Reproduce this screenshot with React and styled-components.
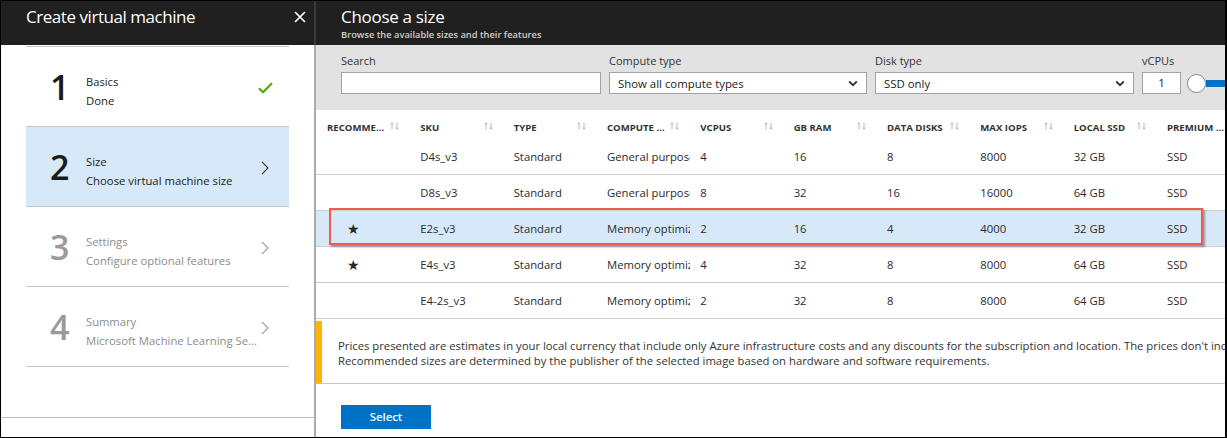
import React from "react";
import styled, { createGlobalStyle } from "styled-components";

const FONT = `"Segoe UI", "Open Sans", "Noto Sans", sans-serif`;

const GlobalStyle = createGlobalStyle`
  html, body { margin: 0; padding: 0; background: #fff; }
  body { font-family: ${FONT}; color: #333; }
  * { box-sizing: border-box; }
`;

const steps = [
  { num: 1, title: "Basics", sub: "Done", state: "done" },
  { num: 2, title: "Size", sub: "Choose virtual machine size", state: "active" },
  { num: 3, title: "Settings", sub: "Configure optional features", state: "todo" },
  { num: 4, title: "Summary", sub: "Microsoft Machine Learning Se...", state: "todo" },
];

const columns = ["RECOMME...", "SKU", "TYPE", "COMPUTE ...", "VCPUS", "GB RAM", "DATA DISKS", "MAX IOPS", "LOCAL SSD", "PREMIUM ..."];

const sizes = [
  { rec: false, sku: "D4s_v3", type: "Standard", compute: "General purpose", vcpu: 4, ram: 16, disks: 8, iops: 8000, ssd: "32 GB", premium: "SSD" },
  { rec: false, sku: "D8s_v3", type: "Standard", compute: "General purpose", vcpu: 8, ram: 32, disks: 16, iops: 16000, ssd: "64 GB", premium: "SSD" },
  { rec: true, sku: "E2s_v3", type: "Standard", compute: "Memory optimized", vcpu: 2, ram: 16, disks: 4, iops: 4000, ssd: "32 GB", premium: "SSD", selected: true },
  { rec: true, sku: "E4s_v3", type: "Standard", compute: "Memory optimized", vcpu: 4, ram: 32, disks: 8, iops: 8000, ssd: "64 GB", premium: "SSD" },
  { rec: false, sku: "E4-2s_v3", type: "Standard", compute: "Memory optimized", vcpu: 2, ram: 32, disks: 8, iops: 8000, ssd: "64 GB", premium: "SSD" },
];

function CloseIcon() {
  return (
    <svg width="12" height="12" viewBox="0 0 12 12" stroke="#fff" strokeWidth="1.7" fill="none">
      <path d="M1 1L11 11M11 1L1 11" />
    </svg>
  );
}

function CheckIcon() {
  return (
    <svg width="15" height="12" viewBox="0 0 15 12" stroke="#5aa700" strokeWidth="2.2" fill="none">
      <path d="M1 6.2L5 10.2L14 1.2" />
    </svg>
  );
}

function ChevronRight({ color }) {
  return (
    <svg width="8" height="14" viewBox="0 0 8 14" stroke={color} strokeWidth="1.1" fill="none">
      <path d="M1 0.8L7 7L1 13.2" />
    </svg>
  );
}

function ChevronDown() {
  return (
    <svg width="10" height="7" viewBox="0 0 10 7" stroke="#333" strokeWidth="1.8" fill="none">
      <path d="M1.2 1.5L5 5.2L8.8 1.5" />
    </svg>
  );
}

function SortIcon() {
  return (
    <svg width="9" height="8" viewBox="0 0 9 8" stroke="#b3b3b3" strokeWidth="0.9" fill="none">
      <path d="M2 7.5V0.8M0.4 2.4L2 0.8L3.6 2.4" />
      <path d="M7 0.5V7.2M5.4 5.6L7 7.2L8.6 5.6" />
    </svg>
  );
}

export default function App() {
  return (
    <>
      <GlobalStyle />
      <Frame>
        <Wizard>
          <WizardHeader>
            <WizardTitle>Create virtual machine</WizardTitle>
            <CloseButton><CloseIcon /></CloseButton>
          </WizardHeader>
          <Steps>
            {steps.map((s) => (
              <Step key={s.num} $state={s.state}>
                <StepNum $state={s.state}>{s.num}</StepNum>
                <StepText $state={s.state}>
                  <StepTitle>{s.title}</StepTitle>
                  <StepSub>{s.sub}</StepSub>
                </StepText>
                <StepIcon>
                  {s.state === "done" ? (
                    <CheckIcon />
                  ) : (
                    <ChevronRight color={s.state === "active" ? "#333" : "#9a9a9a"} />
                  )}
                </StepIcon>
              </Step>
            ))}
          </Steps>
          <WizardFooter />
        </Wizard>

        <Divider />

        <Blade>
          <BladeHeader>
            <BladeTitle>Choose a size</BladeTitle>
            <BladeSubtitle>Browse the available sizes and their features</BladeSubtitle>
          </BladeHeader>

          <Filters>
            <Field $w={260}>
              <FieldLabel>Search</FieldLabel>
              <TextBox />
            </Field>
            <Field $w={258}>
              <FieldLabel>Compute type</FieldLabel>
              <SelectBox>
                <span>Show all compute types</span>
                <ChevronDown />
              </SelectBox>
            </Field>
            <Field $w={259}>
              <FieldLabel>Disk type</FieldLabel>
              <SelectBox>
                <span>SSD only</span>
                <ChevronDown />
              </SelectBox>
            </Field>
            <Field $w={100}>
              <FieldLabel>vCPUs</FieldLabel>
              <SliderRow>
                <NumberBox>1</NumberBox>
                <Thumb />
                <Track />
              </SliderRow>
            </Field>
          </Filters>

          <Table>
            <HeadRow>
              {columns.map((c) => (
                <HeadCell key={c}>
                  <span>{c}</span>
                  <SortIcon />
                </HeadCell>
              ))}
            </HeadRow>
            <Body>
              {sizes.map((r) => (
                <Row key={r.sku} $selected={r.selected}>
                  <Cell $star>{r.rec ? "★" : ""}</Cell>
                  <Cell>{r.sku}</Cell>
                  <Cell>{r.type}</Cell>
                  <Cell>{r.compute}</Cell>
                  <Cell>{r.vcpu}</Cell>
                  <Cell>{r.ram}</Cell>
                  <Cell>{r.disks}</Cell>
                  <Cell>{r.iops}</Cell>
                  <Cell>{r.ssd}</Cell>
                  <Cell>{r.premium}</Cell>
                </Row>
              ))}
              <Callout />
            </Body>
          </Table>

          <Notice>
            <NoticeLine>
              Prices presented are estimates in your local currency that include only Azure infrastructure costs and any discounts for the subscription and location. The prices don't include any applicable software costs.
            </NoticeLine>
            <NoticeLine>
              Recommended sizes are determined by the publisher of the selected image based on hardware and software requirements.
            </NoticeLine>
          </Notice>

          <BladeFooter>
            <PrimaryButton>Select</PrimaryButton>
          </BladeFooter>
        </Blade>
      </Frame>
    </>
  );
}

const Frame = styled.div`
  width: 1227px;
  height: 438px;
  display: flex;
  border: 1px solid #000;
  border-right-width: 2px;
  background: #fff;
  overflow: hidden;
`;

/* wizard (left blade) */
const Wizard = styled.div`
  width: 313px;
  flex: none;
  display: flex;
  flex-direction: column;
`;

const WizardHeader = styled.div`
  height: 44px;
  background: #202020;
  display: flex;
  align-items: flex-start;
  justify-content: space-between;
  padding: 3px 8px 0 25px;
`;

const WizardTitle = styled.div`
  color: #fff;
  font-size: 17px;
  letter-spacing: -0.45px;
  line-height: 26px;
  font-weight: 400;
`;

const CloseButton = styled.div`
  margin-top: 7px;
  width: 12px;
  height: 12px;
  display: flex;
`;

const Steps = styled.div`
  margin: 1px 25px 0;
`;

const Step = styled.div`
  height: 80px;
  display: flex;
  align-items: flex-start;
  padding: 0 16px 0 24px;
  border-top: 1px solid #c6c6c6;
  background: ${(p) => (p.$state === "active" ? "#d7e8f8" : "transparent")};
  &:last-child {
    height: 81px;
    border-bottom: 1px solid #c6c6c6;
  }
`;

const StepNum = styled.div`
  width: 36px;
  margin-top: 23px;
  font-size: 34px;
  line-height: 34px;
  font-weight: 600;
  color: ${(p) => (p.$state === "todo" ? "#9a9a9a" : "#1b1b1b")};
`;

const StepText = styled.div`
  flex: 1;
  min-width: 0;
  margin-top: 26px;
  color: ${(p) => (p.$state === "todo" ? "#8c8c8c" : "#222")};
`;

const StepTitle = styled.div`
  font-size: 11.2px;
  line-height: 18px;
`;

const StepSub = styled.div`
  font-size: 11.3px;
  line-height: 19px;
  white-space: nowrap;
`;

const StepIcon = styled.div`
  width: 16px;
  height: 79px;
  display: flex;
  align-items: center;
  justify-content: center;
  padding-top: 2px;
`;

const WizardFooter = styled.div`
  margin-top: auto;
  height: 20px;
  border-top: 1px solid #bbb;
`;

const Divider = styled.div`
  width: 2px;
  flex: none;
  background: linear-gradient(#3a3a3a 44px, #ababab 44px);
`;

/* size blade */
const Blade = styled.div`
  flex: 1;
  min-width: 0;
  display: flex;
  flex-direction: column;
  overflow: hidden;
`;

const BladeHeader = styled.div`
  height: 44px;
  background: #202020;
  padding: 4px 25px 0;
`;

const BladeTitle = styled.div`
  color: #fff;
  font-size: 17px;
  letter-spacing: -0.3px;
  line-height: 23px;
`;

const BladeSubtitle = styled.div`
  color: #cfcfcf;
  font-size: 9.3px;
  line-height: 13px;
  font-weight: 600;
`;

const Filters = styled.div`
  height: 65px;
  background: #e2e2e2;
  display: flex;
  gap: 8px;
  padding: 8px 25px 0;
`;

const Field = styled.div`
  width: ${(p) => p.$w}px;
  flex: none;
  display: flex;
  flex-direction: column;
`;

const FieldLabel = styled.div`
  font-size: 11px;
  line-height: 16px;
  color: #333;
  margin-bottom: 3px;
`;

const TextBox = styled.div`
  height: 22px;
  background: #fff;
  border: 1px solid #a3a3a3;
`;

const SelectBox = styled.div`
  height: 22px;
  background: #fff;
  border: 1px solid #a3a3a3;
  display: flex;
  align-items: center;
  justify-content: space-between;
  padding: 0 8px 0 8px;
  font-size: 11.4px;
  color: #222;
`;

const SliderRow = styled.div`
  display: flex;
  align-items: center;
  height: 22px;
`;

const NumberBox = styled.div`
  width: 39px;
  height: 22px;
  background: #fff;
  border: 1px solid #a3a3a3;
  font-size: 11.4px;
  line-height: 20px;
  text-align: center;
  color: #222;
`;

const Thumb = styled.div`
  width: 19px;
  height: 19px;
  margin-left: 6px;
  border-radius: 50%;
  background: #fff;
  border: 1.5px solid #8a8a8a;
  flex: none;
`;

const Track = styled.div`
  width: 30px;
  height: 7px;
  background: #0072c6;
`;

const Table = styled.div`
  padding-left: 1px;
`;

const grid = `
  display: grid;
  grid-template-columns: repeat(10, 93.33px);
`;

const HeadRow = styled.div`
  ${grid}
  height: 29px;
  align-items: center;
  padding-top: 5px;
`;

const HeadCell = styled.div`
  display: flex;
  align-items: center;
  justify-content: space-between;
  padding: 0 11px 0 10px;
  font-size: 9.6px;
  font-weight: 700;
  color: #333;
  white-space: nowrap;
  overflow: hidden;
  & svg {
    flex: none;
    margin-top: -3px;
  }
`;

const Body = styled.div`
  position: relative;
`;

const Row = styled.div`
  ${grid}
  height: 36px;
  border-bottom: 1px solid #cfcfcf;
  margin-left: -1px;
  padding-left: 1px;
  background: ${(p) => (p.$selected ? "#d7e8f8" : "transparent")};
`;

const Cell = styled.div`
  font-size: ${(p) => (p.$star ? "14px" : "11.3px")};
  line-height: 36px;
  padding-left: ${(p) => (p.$star ? "30px" : "10px")};
  color: #2b2b2b;
  white-space: nowrap;
  overflow: hidden;
`;

const Callout = styled.div`
  position: absolute;
  left: 12px;
  top: 69px;
  width: 874px;
  height: 37px;
  border: 2px solid #ef5a4e;
  box-shadow: 2px 2px 2px rgba(0, 0, 0, 0.35);
  pointer-events: none;
`;

const Notice = styled.div`
  margin-top: 2px;
  height: 63px;
  border-left: 6px solid #ffb400;
  border-bottom: 1px solid #c6c6c6;
  padding: 17px 0 0 16px;
  display: flex;
  flex-direction: column;
`;

const NoticeLine = styled.div`
  font-size: 11.3px;
  line-height: 15px;
  white-space: nowrap;
  color: #333;
`;

const BladeFooter = styled.div`
  padding: 20px 25px 0;
`;

const PrimaryButton = styled.button`
  width: 90px;
  height: 24px;
  border: none;
  background: #0072c6;
  color: #fff;
  font-family: ${FONT};
  font-size: 11.4px;
  font-weight: 600;
  padding: 0;
`;
